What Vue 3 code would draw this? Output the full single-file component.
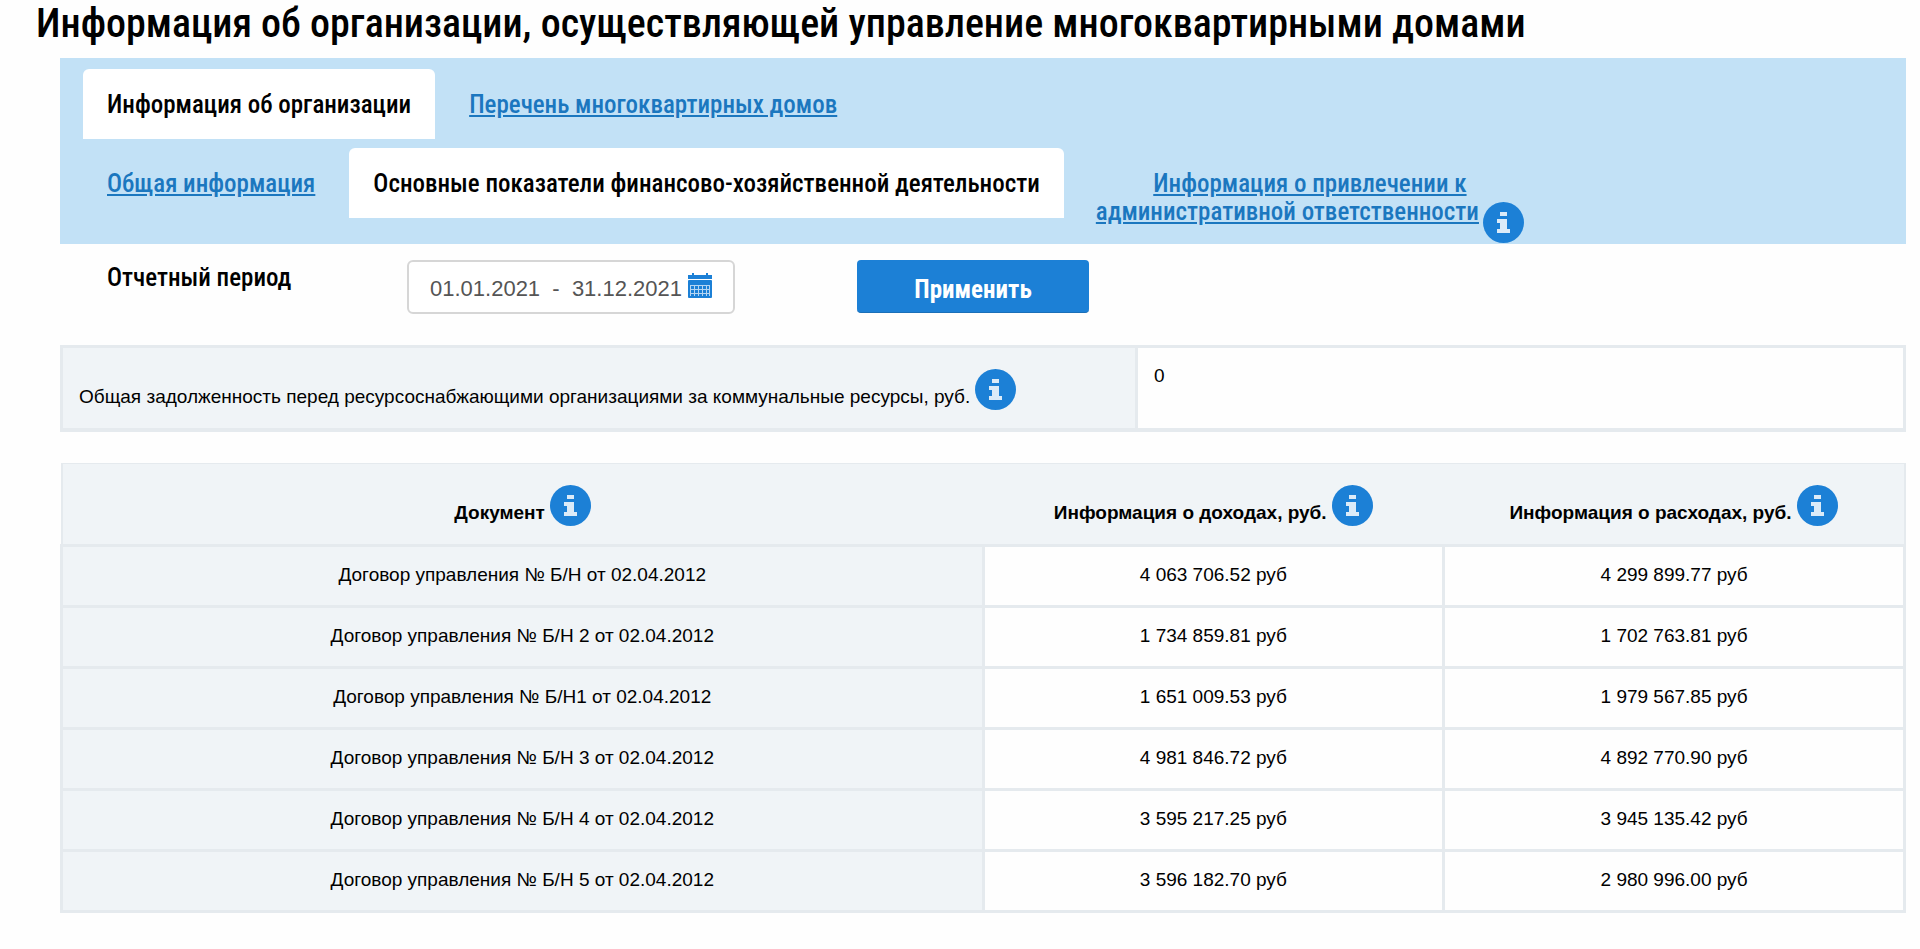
<script setup>
import { ref, h } from 'vue'

const period = ref('01.01.2021  -  31.12.2021')

const rows = [
  { doc: 'Договор управления № Б/Н от 02.04.2012', income: '4 063 706.52 руб', expense: '4 299 899.77 руб' },
  { doc: 'Договор управления № Б/Н 2 от 02.04.2012', income: '1 734 859.81 руб', expense: '1 702 763.81 руб' },
  { doc: 'Договор управления № Б/Н1 от 02.04.2012', income: '1 651 009.53 руб', expense: '1 979 567.85 руб' },
  { doc: 'Договор управления № Б/Н 3 от 02.04.2012', income: '4 981 846.72 руб', expense: '4 892 770.90 руб' },
  { doc: 'Договор управления № Б/Н 4 от 02.04.2012', income: '3 595 217.25 руб', expense: '3 945 135.42 руб' },
  { doc: 'Договор управления № Б/Н 5 от 02.04.2012', income: '3 596 182.70 руб', expense: '2 980 996.00 руб' },
]

const InfoIcon = () =>
  h('svg', { viewBox: '0 0 41 41', width: 41, height: 41, 'aria-hidden': 'true' }, [
    h('circle', { cx: 20.5, cy: 20.5, r: 20.5, fill: '#1c80d6' }),
    h('path', { d: 'M17 10h7v4h-7z M14 17H24V27h3v4H14v-4H17v-6H14z', fill: '#dcebf8' }),
  ])
</script>

<template>
  <main class="page">
    <h1 class="title">Информация об организации, осуществляющей управление многоквартирными домами</h1>

    <div class="content">
      <nav class="tabs">
        <div class="tab-row">
          <a class="tab active" href="#org">Информация об организации</a>
          <a class="tab" href="#houses">Перечень многоквартирных домов</a>
        </div>
        <div class="tab-row">
          <a class="tab" href="#general">Общая информация</a>
          <a class="tab active" href="#finance">Основные показатели финансово-хозяйственной деятельности</a>
          <div class="tab-info">
            <a class="tab-link" href="#liability">Информация о привлечении к<br />административной ответственности</a>
            <button class="info" type="button" aria-label="Справка"><InfoIcon /></button>
          </div>
        </div>
      </nav>

      <form class="filter" @submit.prevent>
        <label class="filter-label" for="period">Отчетный период</label>
        <div class="date-box">
          <input id="period" v-model="period" type="text" />
          <button class="calendar" type="button" aria-label="Календарь">
            <svg viewBox="0 0 24 25" width="24" height="25" aria-hidden="true">
              <path d="M0 2h4V0h2v2h12V0h2v2h4v4H0z" fill="#1c80d6" />
              <rect y="7" width="24" height="18" rx="1" fill="#1c80d6" />
              <path
                d="M2 12.500h20M2 16.500h20M2 20.500h20M2.500 12v11M6.500 12v11M10.500 12v11M14.500 12v11M18.500 12v11M21.500 12v11"
                stroke="#b5d5f2" stroke-width="1" fill="none"
              />
            </svg>
          </button>
        </div>
        <button class="apply" type="submit">Применить</button>
      </form>

      <table class="grid debt">
        <tbody>
          <tr>
            <th scope="row">
              Общая задолженность перед ресурсоснабжающими организациями за коммунальные ресурсы, руб.
              <button class="info" type="button" aria-label="Справка"><InfoIcon /></button>
            </th>
            <td>0</td>
          </tr>
        </tbody>
      </table>

      <table class="grid report">
        <thead>
          <tr>
            <th scope="col" class="doc">Документ <button class="info" type="button" aria-label="Справка"><InfoIcon /></button></th>
            <th scope="col">Информация о доходах, руб. <button class="info" type="button" aria-label="Справка"><InfoIcon /></button></th>
            <th scope="col">Информация о расходах, руб. <button class="info" type="button" aria-label="Справка"><InfoIcon /></button></th>
          </tr>
        </thead>
        <tbody>
          <tr v-for="row in rows" :key="row.doc">
            <th scope="row">{{ row.doc }}</th>
            <td>{{ row.income }}</td>
            <td>{{ row.expense }}</td>
          </tr>
        </tbody>
      </table>
    </div>
  </main>
</template>

<style>
body {
  background: #fefefe;
}
</style>

<style scoped>
.page {
  padding: 0 14px 36px 36px;
  font-family: "Liberation Sans", sans-serif;
  font-size: 19px;
  line-height: 28px;
  color: #000;
}
.title {
  margin: 0;
  padding-bottom: 10px;
  font-family: "Roboto Condensed", Roboto, sans-serif;
  font-size: 40px;
  line-height: 48px;
  font-weight: 500;
}
.content {
  margin-left: 24px;
}
.tabs {
  padding: 11px 23px 26px;
  background: #c2e1f6;
  font-family: "Roboto Condensed", Roboto, sans-serif;
  font-size: 25px;
  line-height: 28px;
  font-weight: 500;
}
.tab-row {
  display: flex;
  align-items: flex-start;
  gap: 10px;
}
.tab-row + .tab-row {
  height: 70px;
  margin-top: 9px;
}
.tab {
  padding: 22px 24px 20px;
}
.tab,
.tab-link {
  color: #1b77bf;
  text-decoration: underline;
}
.tab.active {
  background: #fff;
  border-radius: 6px 6px 0 0;
  color: #000;
  text-decoration: none;
}
.tab-info {
  padding: 22px 0 0 22px;
  text-align: center;
}
.info {
  padding: 0;
  border: 0;
  background: none;
  vertical-align: -7px;
  line-height: 0;
}
.tab-info .info {
  margin-left: 4px;
  vertical-align: -23px;
}
.filter {
  display: flex;
  align-items: flex-start;
  margin-top: 16px;
  font-family: "Roboto Condensed", Roboto, sans-serif;
  font-size: 25px;
  font-weight: 500;
}
.filter-label {
  width: 300px;
  padding-left: 47px;
  line-height: 36px;
}
.date-box {
  display: flex;
  align-items: center;
  box-sizing: border-box;
  width: 328px;
  height: 54px;
  padding: 0 21px;
  border: 2px solid #d6d6d6;
  border-radius: 6px;
  background: #fff;
}
.date-box input {
  flex: 1;
  min-width: 0;
  padding: 4px 0 0;
  border: 0;
  background: none;
  font-family: "Liberation Sans", sans-serif;
  font-size: 22px;
  color: #555;
  outline: none;
}
.calendar {
  padding: 0 0 4px;
  border: 0;
  background: none;
  line-height: 0;
}
.apply {
  width: 232px;
  height: 53px;
  margin-left: 122px;
  padding: 6px 0 0;
  border: 0;
  border-bottom: 1px solid #1a6fb8;
  border-radius: 4px;
  background: #1c80d6;
  color: #fff;
  font-family: "Roboto Condensed", Roboto, sans-serif;
  font-size: 25px;
  font-weight: 700;
}
.grid {
  width: 100%;
  table-layout: fixed;
  border-collapse: collapse;
}
.grid th,
.grid td {
  border: 3px solid #e5eaee;
}
.grid th {
  background: #f0f4f7;
  font-weight: 400;
}
.debt {
  margin-top: 31px;
}
.debt th {
  width: calc(100% * 7 / 12);
  height: 83px;
  padding: 4px 0 0 16px;
  box-sizing: border-box;
  text-align: left;
}
.grid.debt th,
.grid.debt td {
  border-bottom-width: 4px;
}
.debt td {
  padding: 14px 16px;
  vertical-align: top;
}
.report {
  margin-top: 31px;
  text-align: center;
}
.report thead th {
  height: 82px;
  padding: 4px 0 0;
  box-sizing: border-box;
  border-width: 1px 0 3px;
  font-weight: 700;
}
.report thead th:first-child {
  border-left-width: 2px;
}
.report thead th:last-child {
  border-right-width: 2px;
}
.report .doc {
  width: 50%;
}
.report tbody th,
.report tbody td {
  height: 61px;
  padding: 0 0 2px;
  box-sizing: border-box;
}
</style>
